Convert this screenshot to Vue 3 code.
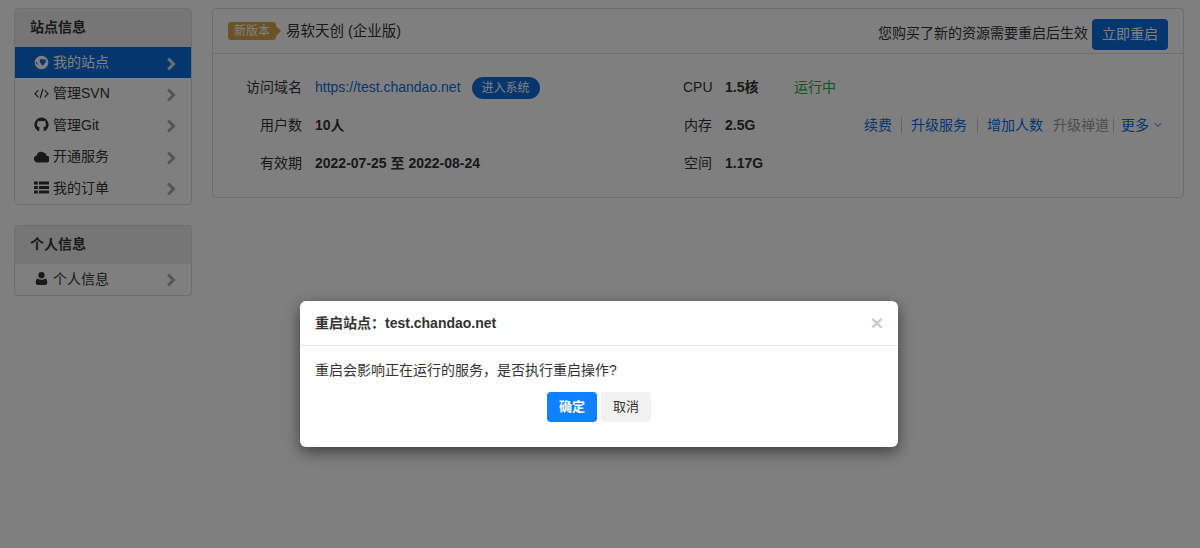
<script setup>
const siteItems = [
  { label: '我的站点', icon: 'globe', active: true },
  { label: '管理SVN', icon: 'code' },
  { label: '管理Git', icon: 'github' },
  { label: '开通服务', icon: 'cloud' },
  { label: '我的订单', icon: 'list' }
]
const icons = {
  globe: 'M7 .6a6.400 6.400 0 1 0 0 12.800a6.400 6.400 0 0 0 0-12.800zM5.600 4.300Q7 3.100 8.400 4.200L11 4.300Q11.600 6.600 9.800 8.200L8 10.300Q6.800 8.200 5.400 6.800zM1.600 6.300 3.200 7.300 3.600 9.400Q2 8.400 1.600 6.300z',
  cloud: 'M11.400 12.600H3.300A3.300 3.300 0 0 1 2.400 6.100 4.200 4.200 0 0 1 8.900 3.200 3.300 3.300 0 0 1 11.600 6.300 3.150 3.150 0 0 1 11.400 12.600z',
  list: 'M0 1.300h3.600v3H0zM4.600 1.300H14v3H4.600zM0 5.500h3.600v3H0zM4.600 5.500H14v3H4.600zM0 9.700h3.600v3H0zM4.600 9.700H14v3H4.600z',
  user: 'M7 1a2.900 2.900 0 1 1 0 5.800a2.900 2.900 0 0 1 0-5.800zM3.400 7Q5 8.200 7 8.200T10.600 7Q12.400 7.600 12.400 11Q12.400 13 10.600 13H3.400Q1.600 13 1.600 11Q1.600 7.600 3.400 7z',
  github: 'M7 .4a6.700 6.700 0 0 0-2.200 13h4.400a6.700 6.700 0 0 0-2.200-13zM3.600 3.200Q4.400 3.200 5.200 3.900Q7 3.500 8.800 3.900Q9.600 3.200 10.400 3.200L10.600 5Q11.200 5.800 11.200 6.800Q11.200 9.400 8.600 9.800Q9.100 10.400 9.100 11V13.400H4.900V11Q5.100 10.300 5.400 9.800Q2.800 9.400 2.800 6.800Q2.800 5.800 3.400 5z'
}
</script>

<template>
  <div class="page">
    <aside class="sidebar">
      <section class="panel">
        <h3 class="panel-title">站点信息</h3>
        <ul class="menu">
          <li v-for="item in siteItems" :key="item.label" class="menu-item" :class="{ active: item.active }">
            <svg v-if="item.icon === 'code'" class="icon" viewBox="0 0 14 14" fill="none" stroke="currentColor" stroke-width="1.100">
              <path d="M4 4 .9 7.200 4 10.400M10 4l3.100 3.200L10 10.400M8.300 2.800 5.700 11.600" />
            </svg>
            <svg v-else class="icon" viewBox="0 0 14 14" fill="currentColor" fill-rule="evenodd">
              <path :d="icons[item.icon]" />
            </svg>
            <span class="menu-label">{{ item.label }}</span>
            <svg class="chevron" viewBox="0 0 10 14" fill="none" stroke="currentColor" stroke-width="3">
              <path d="M2.200 1.500 7.500 7 2.200 12.500" />
            </svg>
          </li>
        </ul>
      </section>
      <section class="panel">
        <h3 class="panel-title">个人信息</h3>
        <ul class="menu">
          <li class="menu-item">
            <svg class="icon" viewBox="0 0 14 14" fill="currentColor"><path :d="icons.user" /></svg>
            <span class="menu-label">个人信息</span>
            <svg class="chevron" viewBox="0 0 10 14" fill="none" stroke="currentColor" stroke-width="3">
              <path d="M2.200 1.500 7.500 7 2.200 12.500" />
            </svg>
          </li>
        </ul>
      </section>
    </aside>

    <main class="main-panel">
      <header class="main-head">
        <span class="badge">新版本</span>
        <span class="edition">易软天创 (企业版)</span>
        <span class="notice">您购买了新的资源需要重启后生效</span>
        <button class="restart" type="button">立即重启</button>
      </header>
      <div class="info">
        <span class="lbl">访问域名</span>
        <span class="val-link">
          <a class="link">https://test.chandao.net</a>
          <span class="enter">进入系统</span>
        </span>
        <span class="lbl lbl2">CPU</span>
        <b class="val">1.5核</b>
        <span class="status">运行中</span>

        <span class="lbl">用户数</span>
        <b class="val">10人</b>
        <span class="lbl lbl2">内存</span>
        <b class="val">2.5G</b>
        <span class="actions">
          <a class="link">续费</a><i class="sep"></i>
          <a class="link">升级服务</a><i class="sep wide"></i>
          <a class="link">增加人数</a>
          <span class="muted">升级禅道</span><i class="sep tight"></i>
          <a class="link">更多</a>
          <svg class="caret" viewBox="0 0 8 6" fill="none" stroke="#0c6ddc" stroke-width="1"><path d="M.8 1.200 4 4.400 7.200 1.200" /></svg>
        </span>

        <span class="lbl">有效期</span>
        <b class="val">2022-07-25 至 2022-08-24</b>
        <span class="lbl lbl2">空间</span>
        <b class="val">1.17G</b>
        <span></span>
      </div>
    </main>

    <div class="overlay">
      <div class="modal">
        <div class="modal-head">
          <strong class="modal-title">重启站点：test.chandao.net</strong>
          <span class="close">×</span>
        </div>
        <div class="modal-body">
          <p class="modal-text">重启会影响正在运行的服务，是否执行重启操作?</p>
          <div class="modal-btns">
            <button class="btn ok" type="button">确定</button>
            <button class="btn cancel" type="button">取消</button>
          </div>
        </div>
      </div>
    </div>
  </div>
</template>

<style>
html, body { margin: 0; background: #fff; }
</style>

<style scoped>
.page {
  position: relative;
  display: flex;
  align-items: flex-start;
  gap: 20px;
  height: 548px;
  box-sizing: border-box;
  padding: 8px 16px 0 14px;
  overflow: hidden;
  font: 14px/20px "Liberation Sans", "Noto Sans CJK SC", sans-serif;
  color: #333;
}
.sidebar { width: 178px; flex: none; display: flex; flex-direction: column; gap: 20px; }
.panel { border: 1px solid #ddd; border-radius: 4px; overflow: hidden; background: #fff; }
.panel-title {
  margin: 0;
  height: 38px;
  padding-left: 15px;
  font-size: 14px;
  font-weight: 700;
  line-height: 37px;
  color: #333;
  background: #ececec;
  box-sizing: border-box;
}
.menu { list-style: none; margin: 0; padding: 0; }
.menu-item {
  display: flex;
  align-items: center;
  height: 31.4px;
  box-sizing: border-box;
  padding: 0 0 1.400px 19px;
  color: #333;
}
.menu-item.active { background: #0c6ddc; color: #fff; }
.icon { width: 15px; height: 15px; flex: none; }
.menu-label { margin-left: 4px; flex: 1; }
.chevron { width: 10px; height: 14px; margin-right: 15px; margin-top: 3px; color: #aaa; flex: none; }
.active .chevron { color: #ddd; }

.main-panel { flex: 1; min-width: 0; height: 190px; box-sizing: border-box; border: 1px solid #ddd; border-radius: 4px; background: #fff; }
.main-head {
  display: flex;
  align-items: center;
  height: 44px;
  padding: 0 15px;
  border-bottom: 1px solid #ddd;
}
.badge {
  position: relative;
  width: 48px;
  height: 18px;
  border-radius: 3px;
  background: #d9a74e;
  color: #fff;
  font-size: 12px;
  line-height: 18px;
  text-align: center;
}
.badge::after {
  content: "";
  position: absolute;
  left: 100%;
  top: 4px;
  border-left: 5px solid #d9a74e;
  border-top: 5px solid transparent;
  border-bottom: 5px solid transparent;
}
.edition { margin-left: 10px; color: #333; font-size: 14.500px; }
.notice { margin-left: auto; margin-top: 3px; }
.restart {
  width: 76px;
  height: 31px;
  margin: 6px 0 0 4px;
  padding: 0;
  border: 0;
  border-radius: 4px;
  background: #0c6ddc;
  color: #fff;
  font: inherit;
}
.info {
  display: grid;
  grid-template-columns: 102px 368px 42px 69px 1fr;
  grid-auto-rows: 38px;
  align-items: center;
  padding-top: 14px;
}
.lbl { text-align: right; padding-right: 13px; }
.val { font-weight: 700; }
.val-link { display: flex; align-items: center; }
.link { color: #0c6ddc; }
.enter {
  margin: 2px 0 0 11px;
  width: 68px;
  height: 22px;
  border-radius: 11px;
  background: #0c6ddc;
  color: #fff;
  font-size: 12px;
  line-height: 22px;
  text-align: center;
}
.status { color: #28a745; }
.actions { display: flex; align-items: center; justify-content: flex-end; padding-right: 21px; }
.sep { width: 1px; height: 16px; background: #ccc; margin: 0 9px; }
.sep.wide { margin-left: 10px; }
.sep.tight { margin: 0 7px 0 4px; }
.muted { color: #999; margin-left: 10px; }
.caret { width: 8px; height: 6px; margin-left: 5px; }

.overlay { position: absolute; inset: 0; background: rgba(0, 0, 0, .5); }
.modal {
  position: absolute;
  left: 300px;
  top: 301px;
  width: 598px;
  height: 146px;
  background: #fff;
  border-radius: 6px;
  box-shadow: 0 5px 15px rgba(0, 0, 0, .5);
}
.modal-head {
  position: relative;
  height: 44px;
  padding: 0 15px;
  border-bottom: 1px solid #e5e5e5;
  display: flex;
  align-items: center;
}
.modal-title { font-size: 14px; color: #333; }
.close {
  position: absolute;
  right: 15px;
  top: 10px;
  font-size: 21px;
  font-weight: 700;
  line-height: 24px;
  color: #ccc;
}
.modal-body { padding: 14px 15px; }
.modal-text { margin: 0 0 12px; }
.modal-btns { display: flex; justify-content: center; gap: 4px; }
.btn { width: 50px; height: 30px; padding: 0; border: 0; border-radius: 4px; font: inherit; font-size: 13px; }
.ok { background: #0f80ff; color: #fff; font-weight: 700; }
.cancel { background: #f2f2f2; color: #333; }
</style>
